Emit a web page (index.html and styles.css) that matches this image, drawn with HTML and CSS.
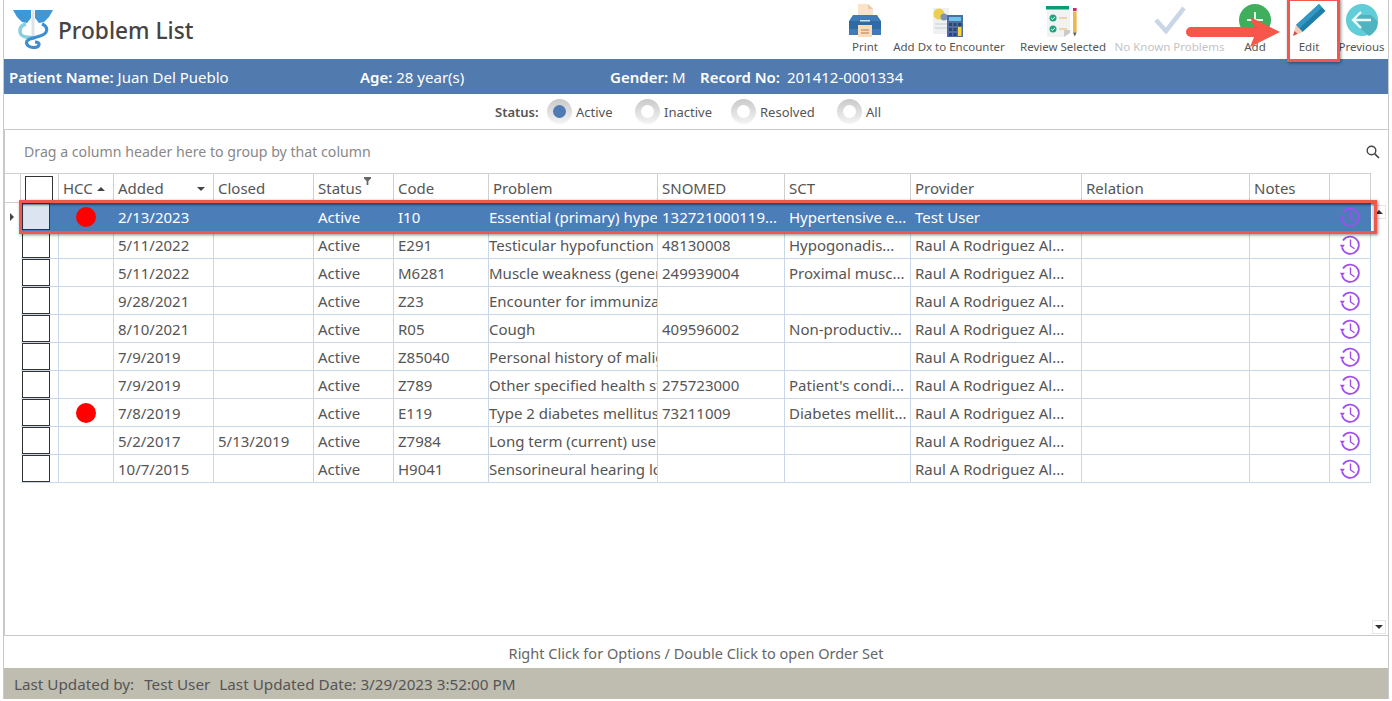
FILE: index.html
```html
<!DOCTYPE html>
<html lang="en">
<head>
<meta charset="utf-8">
<title>Problem List</title>
<link rel="stylesheet" href="styles.css">
</head>
<body>
<svg class="defs" width="0" height="0">
  <symbol id="clock" viewBox="0 0 20 20">
    <path d="M3 5.500A8.600 8.600 0 1 1 2.100 13" fill="none" stroke="currentColor" stroke-width="1.800"/>
    <path d="M-.2 9.800h5l-2.500 3.800z" fill="currentColor"/>
    <path d="M10.500 4.500v6.500l4 2.800" fill="none" stroke="currentColor" stroke-width="1.400"/>
  </symbol>
</svg>
<div class="app">
  <header class="top">
    <div class="brand">
      <svg class="logo" width="40" height="40" viewBox="0 0 40 40">
        <path d="M0 1H18V9L14 14 9 13 4 8z" fill="#3f97d6"/>
        <path d="M40 1H22V9L26 14 31 13 36 8z" fill="#3f97d6"/>
        <rect x="18.500" y="1" width="3" height="30" rx="1.500" fill="#dfe3e6"/>
        <path d="M13 15C5 17 5 27 13 28L22 29" fill="none" stroke="#84cfe0" stroke-width="3.500"/>
        <path d="M29 15C36 18 35 25 27 27L17 30C11 32 13 38 21 38.500C27 38.500 28 33 22 33" fill="none" stroke="#3f8fd0" stroke-width="3.200"/>
      </svg>
      <h1 class="title">Problem List</h1>
    </div>
    <nav class="tools">
      <div class="tool w-print">
        <svg width="34" height="34" viewBox="0 0 34 34">
          <path d="M10 1h10l5 5v8H10z" fill="#fbe3c9"/>
          <path d="M20 1l5 5h-5z" fill="#e8c8a8"/>
          <path d="M5 12h24l4 6v14H1V18z" fill="#3e7bb8"/>
          <path d="M1 18h32v8H1z" fill="#2f6aa5"/>
          <rect x="10" y="22" width="14" height="12" fill="#fbdcb8"/>
          <path d="M13 27h8M13 30h8" stroke="#a98060" stroke-width="1"/>
          <rect x="12" y="17" width="10" height="1.500" fill="#cfe0f0"/>
        </svg>
        <span>Print</span>
      </div>
      <div class="tool w-dx">
        <svg width="34" height="34" viewBox="0 0 34 34">
          <rect x="1" y="5" width="16" height="26" fill="#eef0f2"/>
          <circle cx="7" cy="11" r="5.500" fill="#ecd04c"/>
          <circle cx="12" cy="14" r="3.500" fill="#7b94bb"/>
          <path d="M3 21h13M3 25h13" stroke="#c9cdd2"/>
          <rect x="15" y="12" width="16" height="23" fill="#4f6d9e"/>
          <rect x="17" y="14" width="12" height="4" fill="#69c3ea"/>
          <path d="M17 20h3v3h-3zM21.500 20h3v3h-3zM17 25h3v3h-3zM21.500 25h3v3h-3zM17 30h3v3h-3zM21.500 30h3v3h-3z" fill="#2c4672"/>
          <rect x="26" y="24" width="3.500" height="9" fill="#f5d63d"/>
          <rect x="26" y="20" width="3.500" height="3" fill="#2c4672"/>
        </svg>
        <span>Add Dx to Encounter</span>
      </div>
      <div class="tool w-review">
        <svg width="34" height="34" viewBox="0 0 34 34">
          <path d="M1 4h23v26l-6 4H1z" fill="#f1f2f2"/>
          <path d="M24 27v3l-6 4v-7z" fill="#c8cacc"/>
          <rect y="3" width="23" height="3.500" fill="#0f9a76"/>
          <circle cx="7" cy="15" r="3.500" fill="#1fa57d"/>
          <circle cx="7" cy="26" r="3.500" fill="#1fa57d"/>
          <path d="M5.200 15l1.400 1.400 2.300-2.500M5.200 26l1.400 1.400 2.300-2.500" fill="none" stroke="#fff"/>
          <path d="M13 15h8M13 26h8" stroke="#e7b765" stroke-width="1.200"/>
          <rect x="27" y="5" width="3.600" height="3" fill="#c92a6b"/>
          <rect x="27" y="8.500" width="3.600" height="21" fill="#edb84a"/>
          <path d="M27 29.500h3.600l-1.800 4z" fill="#5a5a50"/>
        </svg>
        <span>Review Selected</span>
      </div>
      <div class="tool w-known is-disabled">
        <svg width="34" height="34" viewBox="0 0 34 34">
          <path d="M3 17l10 11L31 5" fill="none" stroke="#c9d6e6" stroke-width="4.500"/>
        </svg>
        <span>No Known Problems</span>
      </div>
      <div class="tool w-add">
        <svg width="34" height="34" viewBox="0 0 34 34">
          <circle cx="17" cy="17" r="16" fill="#3fae5d"/>
          <path d="M17 9v16M9 17h16" stroke="#e4f4e8" stroke-width="2"/>
        </svg>
        <span>Add</span>
      </div>
      <div class="tool w-edit">
        <svg width="34" height="34" viewBox="0 0 34 34">
          <path d="M27 1l6.500 7L10.500 29 4 22z" fill="#1f7ea8"/>
          <path d="M27 1l3 3.500L7 25.500 4 22z" fill="#3198c5"/>
          <path d="M4 22l6.500 7L1 33z" fill="#f5c9b4"/>
          <path d="M2.500 28l3 2.800L1 33z" fill="#c9504d"/>
        </svg>
        <span>Edit</span>
      </div>
      <div class="tool w-prev">
        <svg width="34" height="34" viewBox="0 0 34 34">
          <circle cx="17" cy="17" r="16" fill="#60cdd8"/>
          <path d="M15 25L24 33A16 16 0 0 0 33 19L26 12H11z" fill="#50b4c0"/>
          <path d="M26 17H9M16 9l-8 8 8 8" fill="none" stroke="#eefafa" stroke-width="2.400"/>
        </svg>
        <span>Previous</span>
      </div>
    </nav>
  </header>

  <div class="patient">
    <div class="pf pf-name"><b>Patient Name:</b> Juan Del Pueblo</div>
    <div class="pf pf-age"><b>Age:</b> 28 year(s)</div>
    <div class="pf pf-gender"><b>Gender:</b> M</div>
    <div class="pf"><b>Record No:</b> <span class="pf-value">201412-0001334</span></div>
  </div>

  <div class="status">
    <span class="status-label">Status:</span>
    <span class="radio is-on"></span><span class="radio-text t-active">Active</span>
    <span class="radio"></span><span class="radio-text t-inactive">Inactive</span>
    <span class="radio"></span><span class="radio-text t-resolved">Resolved</span>
    <span class="radio"></span><span class="radio-text">All</span>
  </div>

  <section class="panel">
    <div class="groupbar">
      <span>Drag a column header here to group by that column</span>
      <svg width="14" height="14" viewBox="0 0 14 14"><circle cx="5.500" cy="5.500" r="4.300" fill="none" stroke="#444" stroke-width="1.400"/><path d="M8.800 8.800L13 13" stroke="#444" stroke-width="1.700"/></svg>
    </div>
    <div class="gridwrap">
      <table class="grid">
        <colgroup>
          <col class="c-ind"><col class="c-chk"><col class="c-hcc"><col class="c-date"><col class="c-date"><col class="c-status"><col class="c-code"><col class="c-problem"><col class="c-snomed"><col class="c-sct"><col class="c-provider"><col class="c-relation"><col class="c-notes"><col class="c-act">
        </colgroup>
        <thead>
          <tr>
            <th class="ind"></th>
            <th class="chk"><span class="box box-head"></span></th>
            <th>HCC<i class="sort-up"></i></th>
            <th class="has-sort">Added<i class="sort-down"></i></th>
            <th>Closed</th>
            <th>Status<svg class="filter" width="7" height="8" viewBox="0 0 8 9"><path d="M0 0h8v1.500L5 4.500V9H3V4.500L0 1.500z" fill="#666"/></svg></th>
            <th>Code</th><th class="problem">Problem</th><th>SNOMED</th><th>SCT</th><th>Provider</th><th>Relation</th><th>Notes</th><th></th>
          </tr>
        </thead>
        <tbody>
          <tr class="is-selected">
            <td class="ind"><i class="row-arrow"></i></td><td class="chk"><span class="box"></span></td><td class="hcc"><i class="dot"></i></td><td>2/13/2023</td><td></td><td>Active</td><td>I10</td><td class="problem">Essential (primary) hypertension</td><td>132721000119...</td><td>Hypertensive e...</td><td>Test User</td><td></td><td></td><td class="act"><svg class="clock"><use href="#clock"/></svg></td>
          </tr>
          <tr>
            <td class="ind"></td><td class="chk"><span class="box"></span></td><td class="hcc"></td><td>5/11/2022</td><td></td><td>Active</td><td>E291</td><td class="problem">Testicular hypofunction</td><td>48130008</td><td>Hypogonadis...</td><td>Raul A Rodriguez Al...</td><td></td><td></td><td class="act"><svg class="clock"><use href="#clock"/></svg></td>
          </tr>
          <tr>
            <td class="ind"></td><td class="chk"><span class="box"></span></td><td class="hcc"></td><td>5/11/2022</td><td></td><td>Active</td><td>M6281</td><td class="problem">Muscle weakness (generalized)</td><td>249939004</td><td>Proximal musc...</td><td>Raul A Rodriguez Al...</td><td></td><td></td><td class="act"><svg class="clock"><use href="#clock"/></svg></td>
          </tr>
          <tr>
            <td class="ind"></td><td class="chk"><span class="box"></span></td><td class="hcc"></td><td>9/28/2021</td><td></td><td>Active</td><td>Z23</td><td class="problem">Encounter for immunization</td><td></td><td></td><td>Raul A Rodriguez Al...</td><td></td><td></td><td class="act"><svg class="clock"><use href="#clock"/></svg></td>
          </tr>
          <tr>
            <td class="ind"></td><td class="chk"><span class="box"></span></td><td class="hcc"></td><td>8/10/2021</td><td></td><td>Active</td><td>R05</td><td class="problem">Cough</td><td>409596002</td><td>Non-productiv...</td><td>Raul A Rodriguez Al...</td><td></td><td></td><td class="act"><svg class="clock"><use href="#clock"/></svg></td>
          </tr>
          <tr>
            <td class="ind"></td><td class="chk"><span class="box"></span></td><td class="hcc"></td><td>7/9/2019</td><td></td><td>Active</td><td>Z85040</td><td class="problem">Personal history of malignant</td><td></td><td></td><td>Raul A Rodriguez Al...</td><td></td><td></td><td class="act"><svg class="clock"><use href="#clock"/></svg></td>
          </tr>
          <tr>
            <td class="ind"></td><td class="chk"><span class="box"></span></td><td class="hcc"></td><td>7/9/2019</td><td></td><td>Active</td><td>Z789</td><td class="problem">Other specified health status</td><td>275723000</td><td>Patient's condi...</td><td>Raul A Rodriguez Al...</td><td></td><td></td><td class="act"><svg class="clock"><use href="#clock"/></svg></td>
          </tr>
          <tr>
            <td class="ind"></td><td class="chk"><span class="box"></span></td><td class="hcc"><i class="dot"></i></td><td>7/8/2019</td><td></td><td>Active</td><td>E119</td><td class="problem">Type 2 diabetes mellitus without</td><td>73211009</td><td>Diabetes mellit...</td><td>Raul A Rodriguez Al...</td><td></td><td></td><td class="act"><svg class="clock"><use href="#clock"/></svg></td>
          </tr>
          <tr>
            <td class="ind"></td><td class="chk"><span class="box"></span></td><td class="hcc"></td><td>5/2/2017</td><td>5/13/2019</td><td>Active</td><td>Z7984</td><td class="problem">Long term (current) use of oral</td><td></td><td></td><td>Raul A Rodriguez Al...</td><td></td><td></td><td class="act"><svg class="clock"><use href="#clock"/></svg></td>
          </tr>
          <tr>
            <td class="ind"></td><td class="chk"><span class="box"></span></td><td class="hcc"></td><td>10/7/2015</td><td></td><td>Active</td><td>H9041</td><td class="problem">Sensorineural hearing loss</td><td></td><td></td><td>Raul A Rodriguez Al...</td><td></td><td></td><td class="act"><svg class="clock"><use href="#clock"/></svg></td>
          </tr>
        </tbody>
      </table>
      <span class="scroll-btn scroll-up"></span>
      <span class="scroll-btn scroll-down"></span>
    </div>
  </section>

  <div class="hint">Right Click for Options / Double Click to open Order Set</div>
  <footer class="updated">
    <span class="u-by">Last Updated by:</span><span class="u-user">Test User</span><span>Last Updated Date: 3/29/2023 3:52:00 PM</span>
  </footer>

  <div class="mark mark-edit"></div>
  <div class="mark mark-row"></div>
  <svg class="arrow" width="96" height="34" viewBox="0 0 96 34">
    <path d="M5 12H68L64 2 94 17 64 32 68 22H5a5 5 0 0 1 0-10z" fill="#f6574a"/>
  </svg>
</div>
</body>
</html>
```
FILE: styles.css
```css
* { box-sizing: border-box; }
html, body { margin: 0; padding: 0; background: #fff; }
body { font-family: "Noto Sans", "Open Sans", "Liberation Sans", sans-serif; color: #555; font-size: 14px; height: 701px; overflow: hidden; }
.defs { position: absolute; }

.app { position: relative; margin-left: 3px; width: 1386px; height: 699px; border-left: 1px solid #c9c9c9; border-right: 1px solid #c9c9c9; display: flex; flex-direction: column; }

.top { height: 59px; flex: none; display: flex; justify-content: space-between; }
.brand { display: flex; align-items: flex-start; padding: 9px 0 0 9px; }
.logo { flex: none; }
.title { margin: 6px 0 0 5px; font-size: 22.700px; line-height: 32px; font-weight: 500; color: #444; }

.tools { display: flex; margin-right: 1px; }
.tool { display: flex; flex-direction: column; align-items: center; padding-top: 3px; font-size: 11.500px; line-height: 16px; color: #555; white-space: nowrap; }
.tool svg { display: block; margin-bottom: 2px; }
.is-disabled { color: #c4c4c4; }
.w-print { width: 36px; }
.w-dx { width: 132px; }
.w-review { width: 96px; }
.w-known { width: 117px; }
.w-add { width: 54px; }
.w-edit { width: 54px; }
.w-prev { width: 51px; }

.patient { height: 35px; flex: none; background: #517aae; color: #fff; display: flex; align-items: center; padding-left: 5px; font-size: 15px; }
.patient b { font-weight: 600; }
.pf { white-space: nowrap; }
.pf-name { width: 351px; }
.pf-age { width: 250px; }
.pf-gender { width: 90px; }
.pf-value { margin-left: 3px; }

.status { height: 35px; flex: none; display: flex; align-items: center; justify-content: flex-start; padding-left: 491px; font-size: 13px; }
.status-label { font-weight: 600; width: 52px; }
.radio { width: 25px; height: 25px; border-radius: 50%; background: linear-gradient(#c9c9c9, #f4f4f4); display: flex; align-items: center; justify-content: center; margin-right: 4px; }
.radio::after { content: ""; width: 13px; height: 13px; border-radius: 50%; background: #fff; }
.radio.is-on::after { background: #4f7bb4; }
.t-active { width: 59px; }
.t-inactive { width: 67px; }
.t-resolved { width: 77px; }

.panel { flex: 1; min-height: 0; border-top: 1px solid #c9c9c9; border-bottom: 1px solid #c9c9c9; border-left: 1px solid #c9c9c9; display: flex; flex-direction: column; }
.groupbar { height: 43px; flex: none; display: flex; align-items: center; justify-content: space-between; padding: 0 8px 0 19px; color: #888; font-size: 14.150px; }
.gridwrap { position: relative; flex: 1; min-height: 0; }

.grid { border-collapse: separate; border-spacing: 0; table-layout: fixed; width: 1366px; font-size: 15px; }
.c-ind { width: 16px; }
.c-chk { width: 38px; }
.c-hcc { width: 55px; }
.c-date { width: 100px; }
.c-status { width: 80px; }
.c-code { width: 95px; }
.c-problem { width: 169px; }
.c-snomed { width: 127px; }
.c-sct { width: 126px; }
.c-provider { width: 171px; }
.c-relation { width: 168px; }
.c-notes { width: 80px; }
.c-act { width: 41px; }

.grid th { position: relative; height: 30px; font-weight: 400; text-align: left; padding: 0 4px; border-top: 1px solid #d0d0d0; border-right: 1px solid #d0d0d0; border-bottom: 1px solid #d0d0d0; white-space: nowrap; color: #555; }
.grid th.chk { padding: 0 0 0 4px; }
.grid td { height: 28px; padding: 0 4px; overflow: hidden; white-space: nowrap; border-right: 1px solid #c8d8e8; border-bottom: 1px solid #c8d8e8; color: #555; }
.grid td.ind { border: 0; position: relative; overflow: visible; }
.grid td.chk { padding: 0 0 0 1px; }
.grid td.problem { padding-left: 0; }

.box { display: block; width: 28px; height: 27px; border: 1px solid #333; background: #fff; }
.box-head { height: 25px; }

.sort-up, .sort-down { display: inline-block; width: 0; height: 0; border-left: 4px solid transparent; border-right: 4px solid transparent; }
.sort-up { border-bottom: 4px solid #444; margin: 0 0 3px 4px; }
.sort-down { position: absolute; right: 8px; top: 13px; border-top: 4px solid #444; }
.filter { position: absolute; left: 50px; top: 3px; }

.dot { display: block; width: 20px; height: 20px; border-radius: 50%; background: #f00; margin-left: 13px; }
.grid td.hcc { padding: 0 0 0 4px; }
.grid td.act { padding: 0 0 0 10px; }
.clock { display: block; width: 20px; height: 20px; color: #a04fee; }

.is-selected td { background: #4b7db9; color: #fff; border-right-color: #4b7db9; border-bottom-color: #4b7db9; }
.grid .is-selected td.ind { background: #fff; }
.is-selected .box { background: #dbe4f0; }
.row-arrow { position: absolute; left: 5px; top: 10px; width: 0; height: 0; border-top: 4px solid transparent; border-bottom: 4px solid transparent; border-left: 4px solid #444; }

.scroll-btn { position: absolute; right: 2px; width: 14px; height: 14px; border: 1px solid #e6e6e6; background: #fff; display: flex; align-items: center; justify-content: center; }
.scroll-btn::after { content: ""; width: 0; height: 0; border-left: 4px solid transparent; border-right: 4px solid transparent; }
.scroll-up { top: 32px; }
.scroll-up::after { border-bottom: 4px solid #333; }
.scroll-down { bottom: 1px; }
.scroll-down::after { border-top: 4px solid #333; }

.hint { height: 32px; flex: none; display: flex; align-items: center; justify-content: center; font-size: 14.500px; color: #666; padding-top: 2px; }
.updated { height: 31px; flex: none; background: #bfbdb0; display: flex; align-items: center; padding-left: 10px; color: #555; font-size: 15.250px; white-space: nowrap; }
.u-by { margin-right: 10px; }
.u-user { margin-right: 9px; }

.mark { position: absolute; border: 3px solid #f0584f; box-shadow: 1px 1px 3px rgba(0,0,0,.45); pointer-events: none; }
.mark-edit { left: 1283px; top: -2px; width: 53px; height: 64px; }
.mark-row { left: 15px; top: 200px; width: 1358px; height: 34px; box-shadow: 1px 1px 3px rgba(0,0,0,.45), inset 0 2px 2px rgba(20,40,70,.65); }
.arrow { position: absolute; left: 1182px; top: 15px; }
```
